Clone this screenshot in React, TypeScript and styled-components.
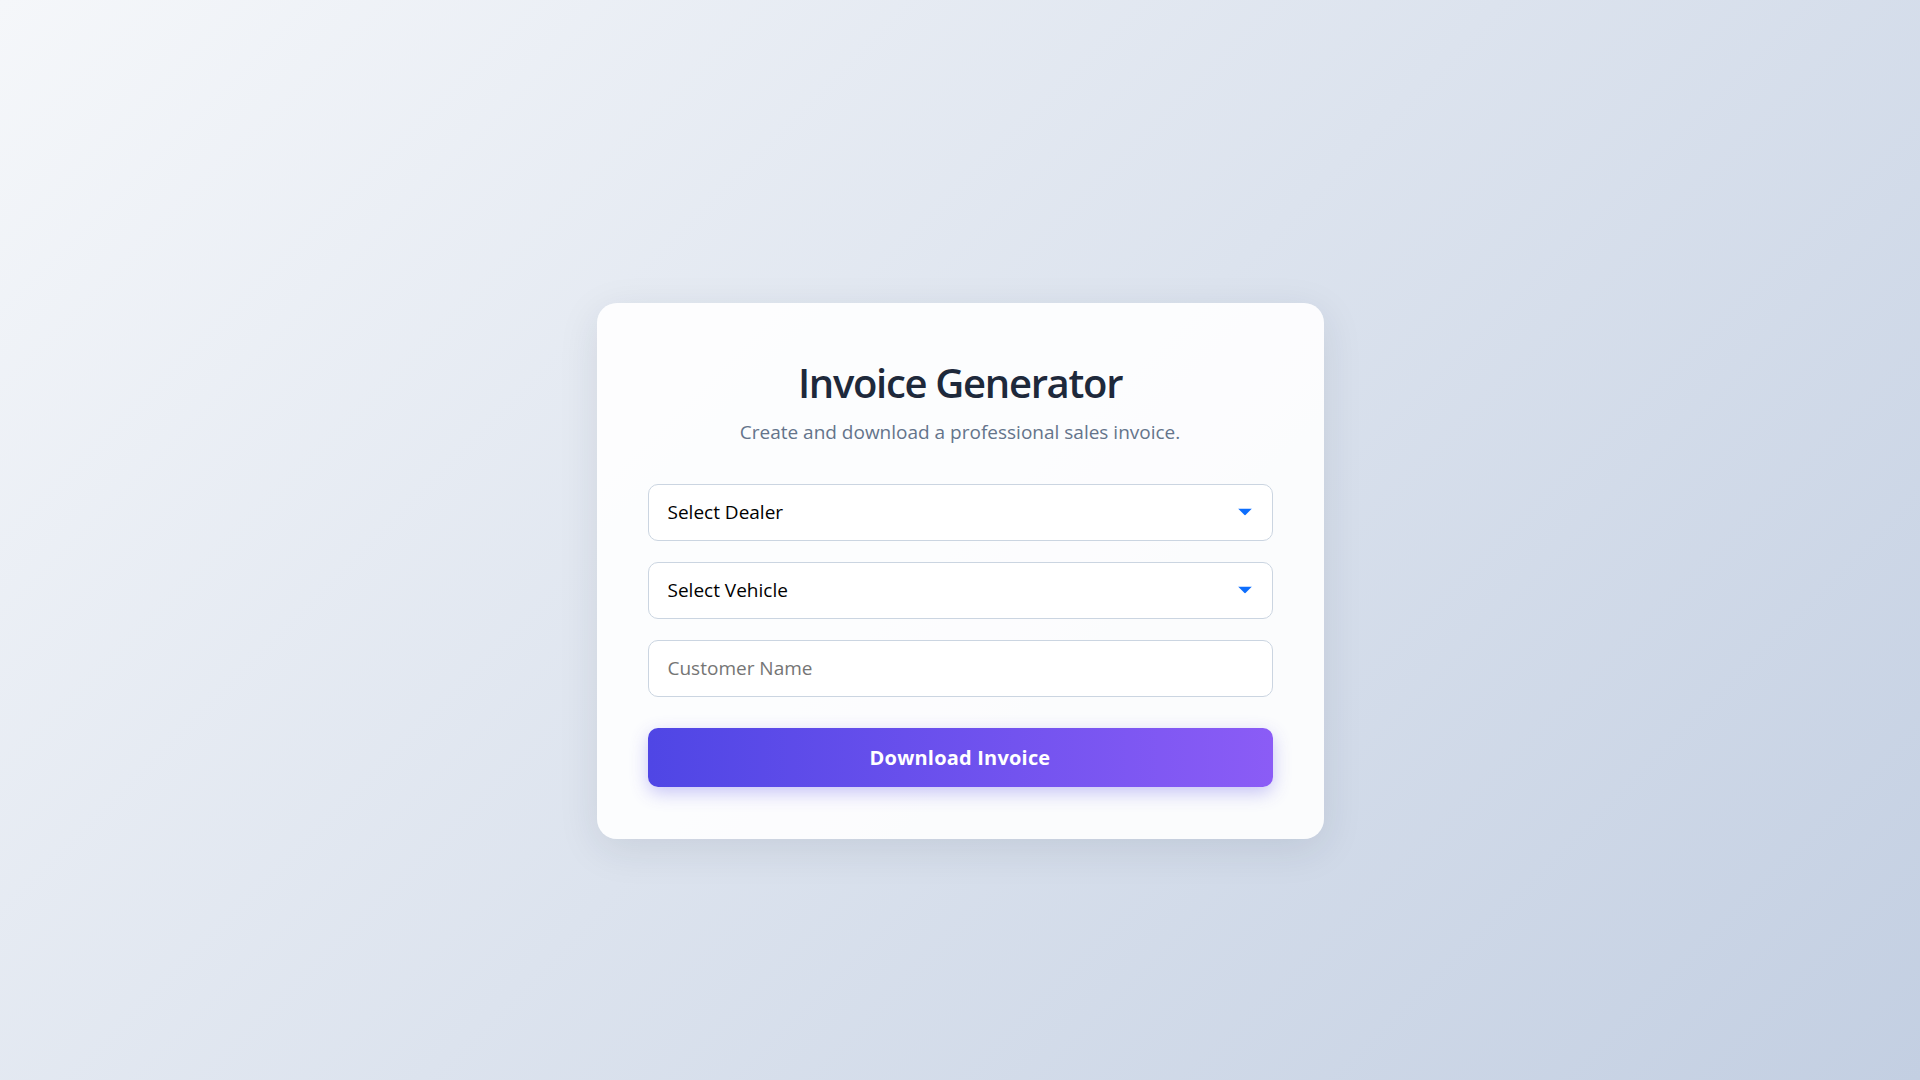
import React from "react";
import styled, { createGlobalStyle } from "styled-components";

const GlobalStyle = createGlobalStyle`
  html, body {
    margin: 0;
    padding: 0;
  }
  body {
    font-family: "Open Sans", "Noto Sans", sans-serif;
    background: linear-gradient(135deg, #f5f7fa 0%, #c3cfe2 100%);
    min-height: 100vh;
  }
  * { box-sizing: border-box; }
`;

const Page = styled.main`
  height: 100vh;
  overflow: hidden;
  display: flex;
  align-items: center;
  justify-content: center;
  padding-top: 61px;
`;

const Card = styled.section`
  width: 727px;
  padding: 52px 51px 52px;
  border-radius: 20px;
  background: rgba(255, 255, 255, 0.9);
  box-shadow: 0 10px 40px rgba(30, 41, 59, 0.1);
  display: flex;
  flex-direction: column;
`;

const Title = styled.h1`
  margin: 0 0 9px;
  text-align: center;
  font-size: 40px;
  font-weight: 600;
  color: #1e293b;
  letter-spacing: -1.3px;
`;

const Subtitle = styled.p`
  margin: 0 0 39px;
  text-align: center;
  font-size: 19px;
  color: #64748b;
`;

const Form = styled.form`
  display: flex;
  flex-direction: column;
  gap: 21px;
`;

const SelectWrap = styled.div`
  position: relative;
`;

const fieldBase = `
  width: 100%;
  height: 57px;
  padding: 0 19px;
  border: 1px solid #cbd5e1;
  border-radius: 10px;
  background: #ffffff;
  font-family: "Open Sans", "Noto Sans", sans-serif;
  font-size: 19px;
  outline: none;
`;

const Select = styled.select`
  ${fieldBase}
  appearance: none;
  -webkit-appearance: none;
  color: #000000;
`;

const Caret = styled.svg`
  position: absolute;
  right: 21px;
  top: 50%;
  width: 14px;
  height: 7px;
  transform: translateY(-50%);
  pointer-events: none;
`;

const Input = styled.input`
  ${fieldBase}
  color: #000000;
  &::placeholder {
    color: #757575;
  }
`;

const Button = styled.button`
  margin-top: 10px;
  height: 59px;
  border: none;
  border-radius: 10px;
  background: linear-gradient(90deg, #4f46e5 0%, #8b5cf6 100%);
  color: #ffffff;
  font-family: "Open Sans", "Noto Sans", sans-serif;
  font-size: 20px;
  font-weight: 700;
  letter-spacing: 0.2px;
  box-shadow: 0 6px 18px rgba(79, 70, 229, 0.3);
  cursor: pointer;
`;

const CaretIcon = () => (
  <Caret viewBox="0 0 14 7" aria-hidden="true">
    <path d="M0 0 H14 L7 7 Z" fill="#0d6efd" />
  </Caret>
);

export default function App() {
  return (
    <>
      <GlobalStyle />
      <Page>
        <Card>
          <Title>Invoice Generator</Title>
          <Subtitle>Create and download a professional sales invoice.</Subtitle>
          <Form onSubmit={(e) => e.preventDefault()}>
            <SelectWrap>
              <Select defaultValue="">
                <option value="">Select Dealer</option>
              </Select>
              <CaretIcon />
            </SelectWrap>
            <SelectWrap>
              <Select defaultValue="">
                <option value="">Select Vehicle</option>
              </Select>
              <CaretIcon />
            </SelectWrap>
            <Input type="text" placeholder="Customer Name" />
            <Button type="submit">Download Invoice</Button>
          </Form>
        </Card>
      </Page>
    </>
  );
}
